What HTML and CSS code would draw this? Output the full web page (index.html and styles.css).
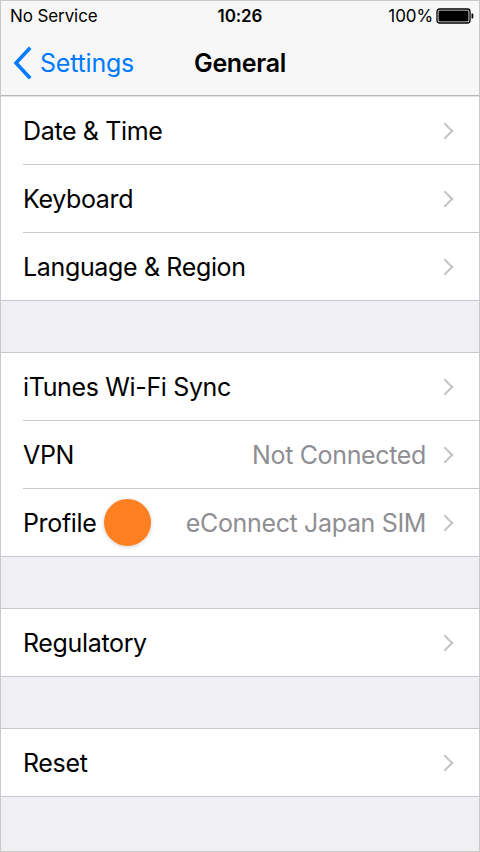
FILE: index.html
```html
<!DOCTYPE html>
<html lang="en">
<head>
    <meta charset="UTF-8">
    <meta name="viewport" content="width=device-width, initial-scale=1.0">
    <title>General</title>
    <link rel="stylesheet" href="styles.css">
</head>
<body>
    <div class="phone">
        <header class="top">
            <div class="status-bar">
                <span class="carrier">No Service</span>
                <span class="clock">10:26</span>
                <span class="power">
                    100%
                    <svg class="battery" width="38" height="16" viewBox="0 0 38 16">
                        <rect x="1" y="1" width="33" height="14" rx="2.5" fill="none" stroke="#000" stroke-width="1.3"/>
                        <rect x="2.5" y="2.5" width="30" height="11" rx="1" fill="#000"/>
                        <path d="M35.5 5.5h0.8a1 1 0 0 1 1 1v3a1 1 0 0 1-1 1h-0.8z" fill="#000"/>
                    </svg>
                </span>
            </div>
            <nav class="nav-bar">
                <a class="back" href="#">
                    <svg width="22" height="34" viewBox="0 0 22 34">
                        <path d="M17 3 L4 17 L17 31" fill="none" stroke="#007aff" stroke-width="3.6" stroke-linecap="square" stroke-linejoin="miter"/>
                    </svg>
                    <span>Settings</span>
                </a>
                <h1 class="title">General</h1>
            </nav>
        </header>

        <section class="group first">
            <div class="row"><span class="label">Date &amp; Time</span><span class="chevron"></span></div>
            <div class="row"><span class="label">Keyboard</span><span class="chevron"></span></div>
            <div class="row"><span class="label">Language &amp; Region</span><span class="chevron"></span></div>
        </section>

        <section class="group">
            <div class="row"><span class="label">iTunes Wi-Fi Sync</span><span class="chevron"></span></div>
            <div class="row"><span class="label">VPN</span><span class="value">Not Connected</span><span class="chevron"></span></div>
            <div class="row">
                <span class="label">Profile</span>
                <span class="tap-dot"></span>
                <span class="value">eConnect Japan SIM</span><span class="chevron"></span>
            </div>
        </section>

        <section class="group">
            <div class="row"><span class="label">Regulatory</span><span class="chevron"></span></div>
        </section>

        <section class="group">
            <div class="row"><span class="label">Reset</span><span class="chevron"></span></div>
        </section>
    </div>
</body>
</html>
```

FILE: styles.css
```css
body {
    margin: 0;
    font-family: "Inter", "Liberation Sans", sans-serif;
    background-color: #ffffff;
}
.phone {
    width: 480px;
    height: 852px;
    box-sizing: border-box;
    border: 1px solid #c9c9c9;
    background-color: #efeff4;
    overflow: hidden;
}
.top {
    background-color: #f7f7f7;
    height: 95px;
    border-bottom: 1px solid #b7b7b7;
    margin-top: -1px;
}
.status-bar {
    height: 31px;
    display: flex;
    align-items: center;
    justify-content: space-between;
    padding: 0 5px 0 9px;
    font-size: 17px;
    letter-spacing: -0.1px;
    position: relative;
}
.clock {
    font-weight: 600;
    position: absolute;
    left: 0;
    right: 0;
    text-align: center;
}
.power {
    display: flex;
    align-items: center;
    gap: 3px;
}
.nav-bar {
    height: 64px;
    display: flex;
    align-items: center;
    position: relative;
}
.back {
    display: flex;
    align-items: center;
    gap: 6px;
    padding-left: 11px;
    color: #007aff;
    text-decoration: none;
    font-size: 25px;
    letter-spacing: -0.2px;
}
.title {
    position: absolute;
    left: 0;
    right: 0;
    margin: 0;
    text-align: center;
    font-size: 25px;
    font-weight: 600;
    letter-spacing: -0.3px;
}
.group {
    background-color: #ffffff;
    border-top: 1px solid #c8c7cc;
    border-bottom: 1px solid #c8c7cc;
    margin-top: 51px;
}
.group.first {
    margin-top: 0;
    border-top-color: #e4e4e8;
}
.row {
    height: 67px;
    display: flex;
    align-items: center;
    padding: 0 22px 0 22px;
    font-size: 25px;
    letter-spacing: -0.35px;
    color: #000000;
    position: relative;
}
.row + .row {
    border-top: 1px solid #c8c7cc;
    margin-left: 22px;
    padding-left: 0;
}
.label {
    flex: 1;
}
.value {
    color: #8e8e93;
    margin-right: 13px;
}
.chevron {
    width: 10px;
    height: 10px;
    border-top: 2px solid #c4c4c9;
    border-right: 2px solid #c4c4c9;
    transform: rotate(45deg);
    margin-right: 6px;
}
.tap-dot {
    position: absolute;
    left: 81px;
    top: 10px;
    width: 47px;
    height: 47px;
    border-radius: 50%;
    background-color: #ff8021;
    box-shadow: 0 1px 4px rgba(0, 0, 0, 0.18);
}
```
